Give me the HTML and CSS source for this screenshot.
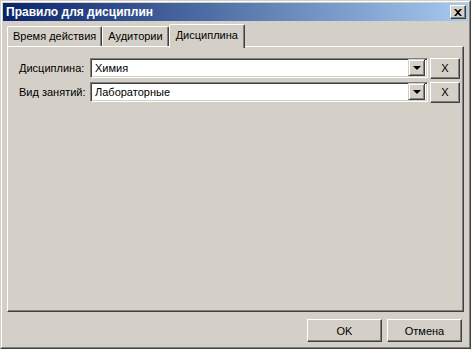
FILE: index.html
```html
<!DOCTYPE html>
<html lang="ru">
<head>
    <meta charset="UTF-8">
    <title>Правило для дисциплин</title>
    <link rel="stylesheet" href="styles.css">
</head>
<body>
    <div class="window">
        <div class="frame">
            <div class="titlebar">
                <span class="title">Правило для дисциплин</span>
                <span class="close-btn">
                    <svg width="8" height="7" viewBox="0 0 8 7"><path d="M0 0h2l2 2 2-2h2L5 3.5 8 7H6L4 5 2 7H0l3-3.5z" fill="#000"/></svg>
                </span>
            </div>

            <div class="content">
                <div class="tabs">
                    <div class="tab">Время действия</div>
                    <div class="tab">Аудитории</div>
                    <div class="tab active">Дисциплина</div>
                </div>
                <div class="panel">
                    <div class="row">
                        <label class="label">Дисциплина:</label>
                        <div class="combo">
                            <span class="combo-text">Химия</span>
                            <span class="combo-btn"><span class="arrow"></span></span>
                        </div>
                        <button class="btn small">X</button>
                    </div>
                    <div class="row">
                        <label class="label">Вид занятий:</label>
                        <div class="combo">
                            <span class="combo-text">Лабораторные</span>
                            <span class="combo-btn"><span class="arrow"></span></span>
                        </div>
                        <button class="btn small">X</button>
                    </div>
                </div>
            </div>

            <div class="footer">
                <button class="btn">OK</button>
                <button class="btn">Отмена</button>
            </div>
        </div>
    </div>
</body>
</html>
```

FILE: styles.css
```css
body {
    margin: 0;
    font-family: "Liberation Sans", Arial, sans-serif;
    font-size: 11px;
    color: #000;
}
.window {
    width: 471px;
    height: 349px;
    box-sizing: border-box;
    background: #d4d0c8;
    border: 1px solid;
    border-color: #d4d0c8 #404040 #404040 #d4d0c8;
    display: flex;
}
.frame {
    flex: 1;
    display: flex;
    flex-direction: column;
    border: 1px solid;
    border-color: #fff #808080 #808080 #fff;
    padding: 1px;
}
.titlebar {
    height: 18px;
    background: linear-gradient(to right, #0a246a, #a6caf0);
    color: #fff;
    display: flex;
    align-items: center;
    justify-content: space-between;
    padding: 0 2px 0 3px;
}
.title {
    font-weight: bold;
    font-size: 12px;
}
.close-btn {
    width: 14px;
    height: 12px;
    background: #d4d0c8;
    border: 1px solid;
    border-color: #fff #404040 #404040 #fff;
    box-shadow: inset -1px -1px #808080;
    display: flex;
    align-items: center;
    justify-content: center;
}
.content {
    flex: 1;
    display: flex;
    flex-direction: column;
    padding: 3px 4px 0 4px;
}
.tabs {
    display: flex;
    height: 22px;
}
.tab {
    margin-top: 2px;
    height: 19px;
    padding: 0 5px;
    line-height: 19px;
    border: 1px solid;
    border-bottom: none;
    border-color: #fff #404040 transparent #fff;
    box-shadow: inset -1px 0 #808080;
    border-radius: 2px 2px 0 0;
}
.tab.active {
    position: relative;
    z-index: 1;
    margin-top: 0;
    margin-left: 0;
    height: 23px;
    padding: 0 6px;
    line-height: 21px;
    background: #d4d0c8;
}
.panel {
    flex: 1;
    border: 1px solid;
    border-color: #fff #404040 #404040 #fff;
    box-shadow: inset -1px -1px #808080;
    padding: 11px 0 0 11px;
    display: flex;
    flex-direction: column;
    gap: 4px;
}
.row {
    display: flex;
    align-items: center;
    height: 20px;
}
.label {
    width: 71px;
}
.combo {
    width: 338px;
    height: 20px;
    box-sizing: border-box;
    background: #fff;
    border: 1px solid;
    border-color: #808080 #fff #fff #808080;
    box-shadow: inset 1px 1px #404040, inset -1px -1px #d4d0c8;
    display: flex;
    align-items: center;
    padding: 1px 2px 2px 2px;
}
.combo-text {
    flex: 1;
    padding-left: 2px;
}
.combo-btn {
    width: 15px;
    height: 15px;
    background: #d4d0c8;
    border: 1px solid;
    border-color: #d4d0c8 #404040 #404040 #d4d0c8;
    box-shadow: inset 1px 1px #fff, inset -1px -1px #808080;
    display: flex;
    align-items: center;
    justify-content: center;
}
.arrow {
    width: 0;
    height: 0;
    border-left: 4px solid transparent;
    border-right: 4px solid transparent;
    border-top: 4px solid #000;
}
.btn {
    font-family: inherit;
    font-size: 11px;
    width: 75px;
    height: 23px;
    background: #d4d0c8;
    border: 1px solid;
    border-color: #fff #404040 #404040 #fff;
    box-shadow: inset -1px -1px #808080;
    padding: 0;
    color: #000;
}
.btn.small {
    width: 30px;
    height: 21px;
    margin-left: 2px;
}
.footer {
    display: flex;
    justify-content: flex-end;
    gap: 5px;
    padding: 7px 6px 4px 0;
}
```
